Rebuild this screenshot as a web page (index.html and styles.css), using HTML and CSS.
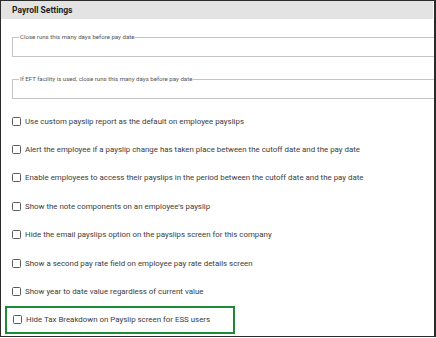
FILE: index.html
```html
<!DOCTYPE html>
<html lang="en">
<head>
  <meta charset="UTF-8" />
  <meta name="viewport" content="width=device-width, initial-scale=1.0" />
  <title>Payroll Settings</title>
  <link rel="stylesheet" href="styles.css">
</head>
<body>
  <div class="panel">
    <div class="panelHeader">Payroll Settings</div>
    <div class="panelBody">
      <fieldset class="field">
        <legend>Close runs this many days before pay date</legend>
        <div class="fieldInput"></div>
      </fieldset>
      <fieldset class="field">
        <legend>If EFT facility is used, close runs this many days before pay date</legend>
        <div class="fieldInput"></div>
      </fieldset>
      <div class="options">
        <label class="option"><span class="box"></span>Use custom payslip report as the default on employee payslips</label>
        <label class="option"><span class="box"></span>Alert the employee if a payslip change has taken place between the cutoff date and the pay date</label>
        <label class="option"><span class="box"></span>Enable employees to access their payslips in the period between the cutoff date and the pay date</label>
        <label class="option"><span class="box"></span>Show the note components on an employee's payslip</label>
        <label class="option"><span class="box"></span>Hide the email payslips option on the payslips screen for this company</label>
        <label class="option"><span class="box"></span>Show a second pay rate field on employee pay rate details screen</label>
        <label class="option"><span class="box"></span>Show year to date value regardless of current value</label>
        <label class="option highlight"><span class="box"></span>Hide Tax Breakdown on Payslip screen for ESS users</label>
      </div>
    </div>
  </div>
</body>
</html>
```

FILE: styles.css
```css
body {
  margin: 0;
  background: #fff;
  font-family: Roboto, "Liberation Sans", sans-serif;
}
.panel {
  box-sizing: border-box;
  width: 436px;
  height: 337px;
  border: 1px solid #2b2b2b;
  border-right-width: 2px;
  overflow: hidden;
}
.panelHeader {
  height: 18px;
  margin-right: 1px;
  padding-left: 11px;
  background: #e3e3e3;
  font-size: 8.5px;
  font-weight: bold;
  line-height: 18px;
  color: #222;
}
.panelBody {
  padding-left: 11px;
}
.field {
  margin: 14px -10px 0 0;
  padding: 0;
  border: 1px solid #c4c4c4;
}
.field + .field {
  margin-top: 18px;
}
.field legend {
  margin-left: 6px;
  padding: 0 1px;
  font-size: 6.1px;
  line-height: 8px;
  color: #555;
}
.fieldInput {
  height: 15px;
}
.options {
  display: flex;
  flex-direction: column;
  padding-top: 8px;
}
.option {
  display: flex;
  align-items: center;
  gap: 4px;
  height: 28.4px;
  font-size: 7.9px;
  color: #3c3c3c;
}
.box {
  box-sizing: border-box;
  width: 9px;
  height: 9px;
  border: 1px solid #5a5a5a;
  border-radius: 1.5px;
  background: #fff;
  flex-shrink: 0;
}
.highlight {
  box-sizing: border-box;
  width: 230px;
  margin-left: -7px;
  padding-left: 6px;
  border: 2px solid #1f8a3a;
}
```
